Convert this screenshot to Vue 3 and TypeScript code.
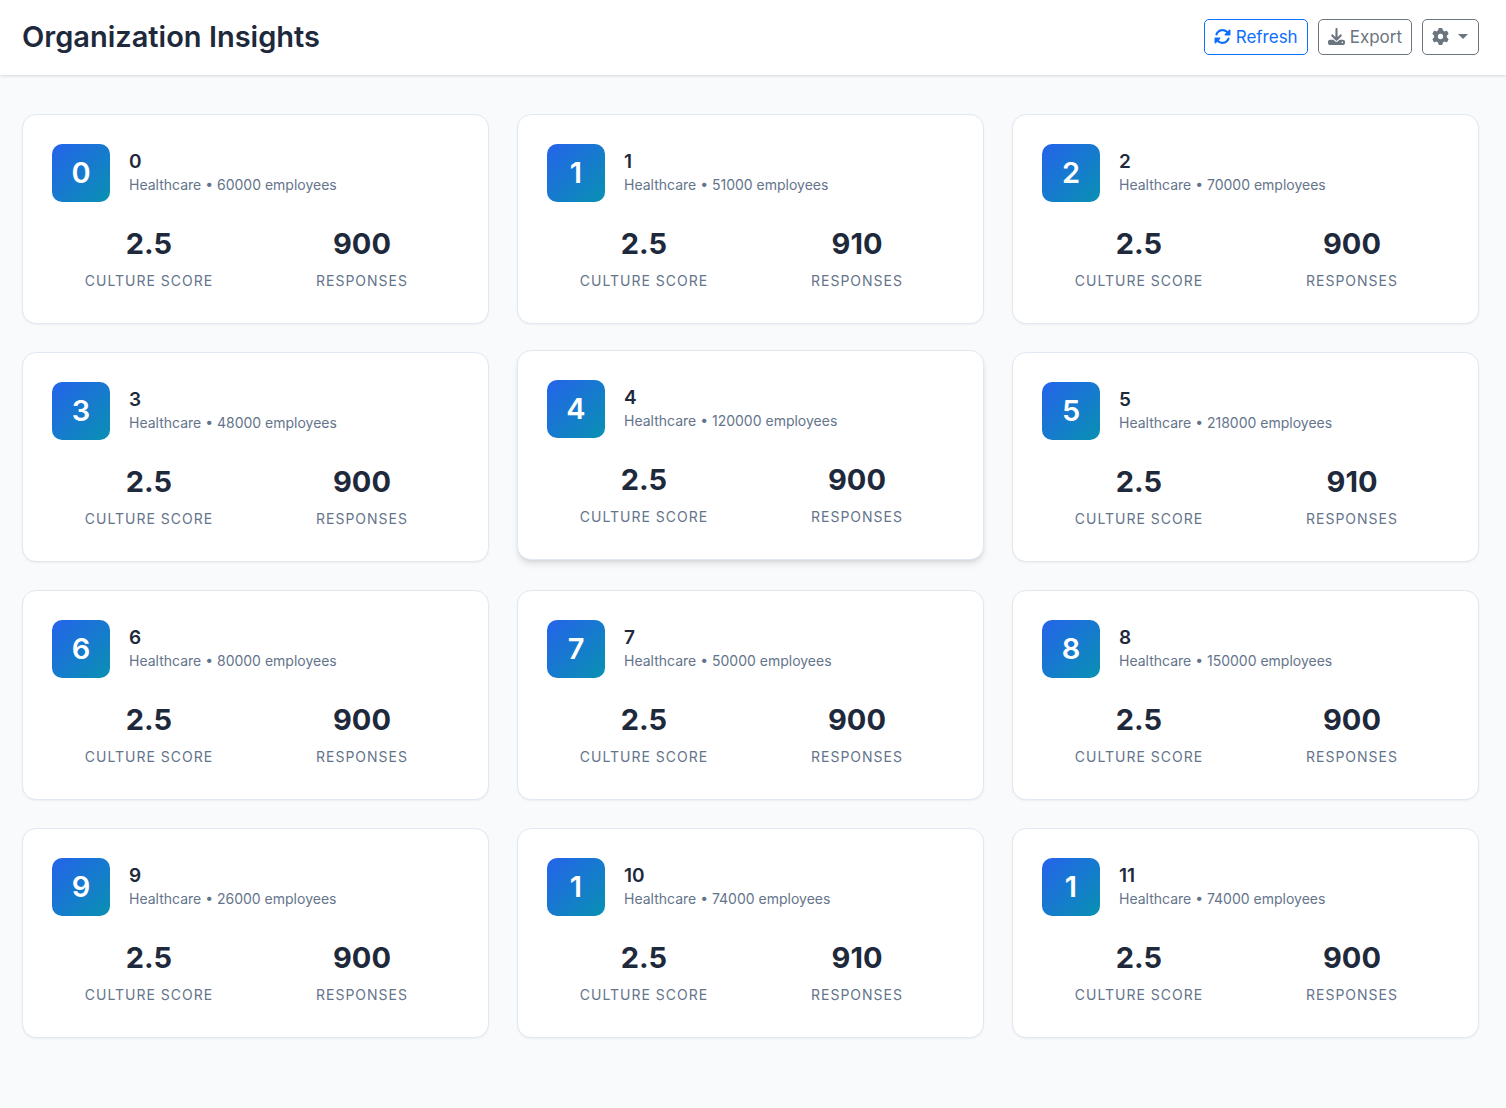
<script setup lang="ts">
import { ref } from 'vue'

interface Organization {
  name: string
  industry: string
  employees: number
  score: string
  responses: number
}

const industry = 'Healthcare'
const score = '2.5'

const organizations = ref<Organization[]>([
  { name: '0', industry, employees: 60000, score, responses: 900 },
  { name: '1', industry, employees: 51000, score, responses: 910 },
  { name: '2', industry, employees: 70000, score, responses: 900 },
  { name: '3', industry, employees: 48000, score, responses: 900 },
  { name: '4', industry, employees: 120000, score, responses: 900 },
  { name: '5', industry, employees: 218000, score, responses: 910 },
  { name: '6', industry, employees: 80000, score, responses: 900 },
  { name: '7', industry, employees: 50000, score, responses: 900 },
  { name: '8', industry, employees: 150000, score, responses: 900 },
  { name: '9', industry, employees: 26000, score, responses: 900 },
  { name: '10', industry, employees: 74000, score, responses: 910 },
  { name: '11', industry, employees: 74000, score, responses: 900 },
])

const active = ref('4')
</script>

<template>
  <div class="page">
    <header class="topbar">
      <h1 class="title">Organization Insights</h1>
      <div class="actions">
        <button type="button" class="btn btn-primary">
          <svg class="icon" viewBox="0 0 512 512" aria-hidden="true">
            <path d="M142.9 142.9c62.2-62.2 162.7-62.5 225.3-1L327 183c-6.9 6.9-8.9 17.2-5.2 26.2s12.5 14.8 22.2 14.8H463.5H472c13.3 0 24-10.7 24-24V72c0-9.7-5.8-18.5-14.8-22.2s-19.3-1.7-26.2 5.2L413.4 96.6c-87.6-86.5-228.7-86.2-315.8 1C73.2 122 55.6 150.7 44.8 181.4c-5.9 16.7 2.9 34.9 19.5 40.8s34.9-2.9 40.8-19.5c7.7-21.8 20.2-42.3 37.8-59.8zM16 312v7.6 .7V440c0 9.7 5.8 18.5 14.8 22.2s19.3 1.7 26.2-5.2l41.6-41.6c87.6 86.5 228.7 86.2 315.8-1c24.4-24.4 42.1-53.1 52.9-83.7c5.9-16.7-2.9-34.9-19.5-40.8s-34.9 2.9-40.8 19.5c-7.7 21.8-20.2 42.3-37.8 59.8c-62.2 62.2-162.7 62.5-225.3 1L185 329c6.9-6.9 8.9-17.2 5.2-26.2s-12.5-14.8-22.2-14.8H48.4h-.7H40c-13.3 0-24 10.7-24 24z" />
          </svg>
          <span>Refresh</span>
        </button>
        <button type="button" class="btn">
          <svg class="icon" viewBox="0 0 512 512" aria-hidden="true">
            <path d="M288 32c0-17.7-14.3-32-32-32s-32 14.3-32 32V274.7l-73.4-73.4c-12.5-12.5-32.8-12.5-45.3 0s-12.5 32.8 0 45.3l128 128c12.5 12.5 32.8 12.5 45.3 0l128-128c12.5-12.5 12.5-32.8 0-45.3s-32.8-12.5-45.3 0L288 274.7V32zM64 352c-35.3 0-64 28.7-64 64v32c0 35.3 28.7 64 64 64H448c35.3 0 64-28.7 64-64V416c0-35.3-28.7-64-64-64H346.5l-45.3 45.3c-25 25-65.5 25-90.5 0L165.5 352H64zm368 56a24 24 0 1 1 0 48 24 24 0 1 1 0-48z" />
          </svg>
          <span>Export</span>
        </button>
        <button type="button" class="btn btn-menu" aria-label="Settings" aria-haspopup="true">
          <svg class="icon" viewBox="0 0 512 512" aria-hidden="true">
            <path d="M495.9 166.6c3.2 8.7 .5 18.4-6.4 24.6l-43.3 39.4c1.1 8.3 1.7 16.8 1.7 25.4s-.6 17.1-1.7 25.4l43.3 39.4c6.9 6.2 9.6 15.9 6.4 24.6c-4.4 11.9-9.7 23.3-15.8 34.3l-4.7 8.1c-6.6 11-14 21.4-22.1 31.2c-5.9 7.2-15.7 9.6-24.5 6.8l-55.7-17.7c-13.4 10.3-28.2 18.9-44 25.4l-12.5 57.1c-2 9.1-9 16.3-18.2 17.8c-13.8 2.3-28 3.5-42.5 3.5s-28.7-1.2-42.5-3.5c-9.2-1.5-16.2-8.7-18.2-17.8l-12.5-57.1c-15.8-6.5-30.6-15.1-44-25.4L83.1 425.9c-8.8 2.8-18.6 .3-24.5-6.8c-8.1-9.8-15.5-20.2-22.1-31.2l-4.7-8.1c-6.1-11-11.4-22.4-15.8-34.3c-3.2-8.7-.5-18.4 6.4-24.6l43.3-39.4C64.6 273.1 64 264.6 64 256s.6-17.1 1.7-25.4L22.4 191.2c-6.9-6.2-9.6-15.9-6.4-24.6c4.4-11.9 9.7-23.3 15.8-34.3l4.7-8.1c6.6-11 14-21.4 22.1-31.2c5.9-7.2 15.7-9.6 24.5-6.8l55.7 17.7c13.4-10.3 28.2-18.9 44-25.4l12.5-57.1c2-9.1 9-16.3 18.2-17.8C227.3 1.2 241.5 0 256 0s28.7 1.2 42.5 3.5c9.2 1.5 16.2 8.7 18.2 17.8l12.5 57.1c15.8 6.5 30.6 15.1 44 25.4l55.7-17.7c8.8-2.8 18.6-.3 24.5 6.8c8.1 9.8 15.5 20.2 22.1 31.2l4.7 8.1c6.1 11 11.4 22.4 15.8 34.3zM256 336a80 80 0 1 0 0-160 80 80 0 1 0 0 160z" />
          </svg>
          <span class="caret"></span>
        </button>
      </div>
    </header>

    <main class="grid">
      <article
        v-for="org in organizations"
        :key="org.name"
        class="card"
        :class="{ raised: org.name === active }"
        @mouseenter="active = org.name"
      >
        <div class="card-head">
          <div class="logo">{{ org.name.charAt(0) }}</div>
          <div>
            <h2 class="name">{{ org.name }}</h2>
            <p class="meta">{{ org.industry }} • {{ org.employees }} employees</p>
          </div>
        </div>
        <div class="stats">
          <div class="stat">
            <div class="value">{{ org.score }}</div>
            <div class="label">Culture Score</div>
          </div>
          <div class="stat">
            <div class="value">{{ org.responses }}</div>
            <div class="label">Responses</div>
          </div>
        </div>
      </article>
    </main>
  </div>
</template>

<style>
body {
  background: #f8fafc;
}
</style>

<style scoped>
.page {
  min-height: 100vh;
  box-sizing: border-box;
  background: #f8fafc;
  color: #1e293b;
  font-family: Inter, 'Liberation Sans', sans-serif;
}

.page * {
  box-sizing: border-box;
}

.topbar {
  display: flex;
  align-items: flex-start;
  justify-content: space-between;
  padding: 19px 27px 20px 22px;
  background: #fff;
  box-shadow: 0 1px 3px rgba(0, 0, 0, 0.14);
}

.title {
  margin: 0;
  font-size: 29px;
  font-weight: 600;
  line-height: 36px;
}

.actions {
  display: flex;
  gap: 10px;
}

.btn {
  display: flex;
  align-items: flex-start;
  gap: 5px;
  height: 36px;
  padding: 8px 9px;
  border: 1px solid #6c757d;
  border-radius: 5px;
  background: transparent;
  color: #6c757d;
  font-family: inherit;
  font-size: 17px;
  line-height: 19px;
  cursor: pointer;
}

.btn-primary {
  border-color: #0d6efd;
  color: #0d6efd;
}

.btn-menu {
  align-items: center;
  gap: 9px;
  padding: 8px 10px 9px 9px;
}

.icon {
  width: 17px;
  height: 17px;
  fill: currentColor;
}

.caret {
  border-top: 5px solid currentColor;
  border-right: 5px solid transparent;
  border-left: 5px solid transparent;
}

.grid {
  display: grid;
  grid-template-columns: repeat(3, 1fr);
  gap: 28px;
  padding: 39px 27px 70px 22px;
}

.card {
  padding: 29px;
  border: 1px solid #e2e8f0;
  border-radius: 14px;
  background: #fff;
  box-shadow: 0 1px 2px rgba(0, 0, 0, 0.05);
}

.raised {
  transform: translateY(-2px);
  box-shadow: 0 5px 7px -1px rgba(0, 0, 0, 0.1), 0 2px 5px -2px rgba(0, 0, 0, 0.1);
}

.card-head {
  display: flex;
  align-items: center;
  gap: 19px;
  margin-bottom: 24px;
}

.logo {
  width: 58px;
  height: 58px;
  border-radius: 10px;
  background: linear-gradient(135deg, #2563eb, #0891b2);
  color: #fff;
  font-size: 29px;
  font-weight: 600;
  line-height: 58px;
  text-align: center;
}

.name {
  margin: 0;
  font-size: 19px;
  font-weight: 600;
  line-height: 23px;
}

.meta {
  margin: 0;
  color: #64748b;
  font-size: 14px;
  line-height: 23px;
}

.stats {
  display: grid;
  grid-template-columns: 1fr 1fr;
  gap: 19px;
}

.stat {
  text-align: center;
}

.value {
  font-size: 29px;
  font-weight: 700;
  line-height: 36px;
}

.label {
  margin-top: 6px;
  color: #64748b;
  font-size: 14px;
  line-height: 26px;
  letter-spacing: 1px;
  text-transform: uppercase;
}
</style>
